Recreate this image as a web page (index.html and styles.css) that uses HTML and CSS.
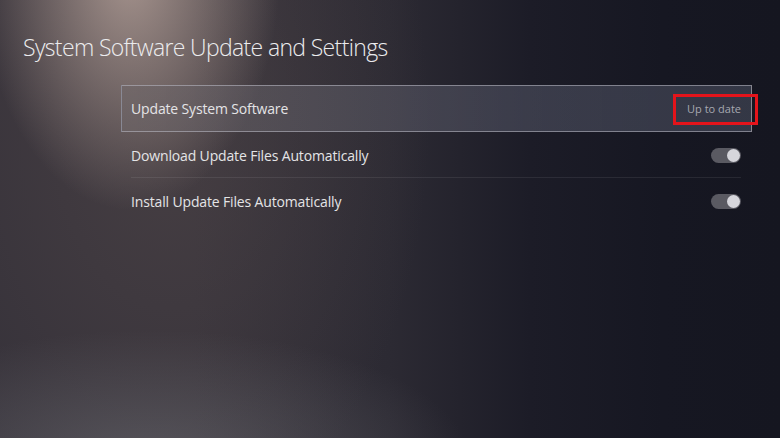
FILE: index.html
```html
<!DOCTYPE html>
<html lang="en">
<head>
<meta charset="UTF-8" />
<title>System Software Update and Settings</title>
<link rel="stylesheet" href="styles.css">
</head>
<body>

<div class="screen">
  <h1 class="page-title">System Software Update and Settings</h1>

  <ul class="settings">
    <li class="row row-selected">
      <span class="label">Update System Software</span>
      <span class="status">Up to date</span>
      <span class="highlight"></span>
    </li>
    <li class="row row-divided">
      <span class="label">Download Update Files Automatically</span>
      <span class="toggle"><span class="knob"></span></span>
    </li>
    <li class="row">
      <span class="label">Install Update Files Automatically</span>
      <span class="toggle"><span class="knob"></span></span>
    </li>
  </ul>
</div>

</body>
</html>
```

FILE: styles.css
```css
body {
  margin: 0;
  background: #161722;
  font-family: 'Open Sans', 'Noto Sans', sans-serif;
  color: #e6e6e8;
}
.screen {
  width: 780px;
  height: 438px;
  overflow: hidden;
  background:
    radial-gradient(ellipse 150px 240px at 130px -30px, rgba(200, 178, 168, 0.75), rgba(200, 178, 168, 0) 100%),
    radial-gradient(ellipse 320px 130px at 150px 460px, rgba(110, 110, 116, 0.55), rgba(110, 110, 116, 0) 100%),
    radial-gradient(ellipse 260px 420px at 170px 120px, rgba(90, 78, 78, 0.45), rgba(90, 78, 78, 0) 100%),
    linear-gradient(to right, #36323a 0%, #36323a 25%, #2c2a33 50%, #1c1c27 68%, #161722 85%, #151620 100%);
}
.page-title {
  margin: 0;
  padding: 32px 0 0 23px;
  font-size: 23px;
  font-weight: 300;
  line-height: 30px;
  letter-spacing: -0.65px;
  color: #ececee;
}
.settings {
  list-style: none;
  margin: 23px 0 0 121px;
  padding: 0;
  width: 631px;
}
.row {
  position: relative;
  display: flex;
  align-items: center;
  justify-content: space-between;
  height: 46px;
  padding: 0 10px 0 9px;
  border: 1px solid transparent;
  box-sizing: border-box;
}
.row-selected {
  height: 47px;
  border-color: rgba(190, 190, 200, 0.55);
  background: linear-gradient(to right, rgba(110, 102, 104, 0.55), rgba(80, 82, 98, 0.6) 60%, rgba(62, 66, 82, 0.75));
}
.row-divided::after {
  content: "";
  position: absolute;
  left: 9px;
  right: 10px;
  bottom: -1px;
  height: 1px;
  background: rgba(255, 255, 255, 0.08);
}
.label {
  font-size: 14px;
  letter-spacing: -0.15px;
  color: #e4e4e6;
}
.status {
  font-size: 11px;
  color: #a6a8b0;
}
.highlight {
  position: absolute;
  top: 8px;
  right: -7px;
  width: 85px;
  height: 31px;
  border: 3px solid #e4141b;
  box-sizing: border-box;
}
.toggle {
  display: flex;
  align-items: center;
  justify-content: flex-end;
  width: 30px;
  height: 15px;
  border-radius: 8px;
  background: #5a5a62;
  padding: 1px;
  box-sizing: border-box;
}
.knob {
  width: 13px;
  height: 13px;
  border-radius: 50%;
  background: #d6d6dc;
}
```
